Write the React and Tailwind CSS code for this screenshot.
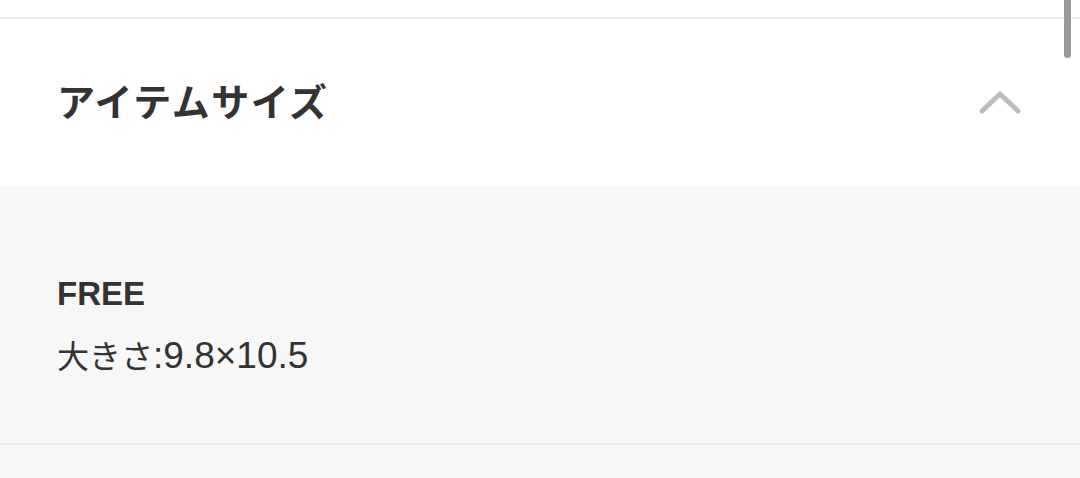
import React from "react";

export default function App() {
  return (
    <div
      className="relative w-[1080px] h-[478px] overflow-hidden bg-white text-[#333]"
      style={{ fontFamily: '"Liberation Sans", "Noto Sans CJK JP", sans-serif' }}
    >
      {/* previous section tail */}
      <div className="h-[19px] bg-white border-b-2 border-[#ededed]" />

      {/* accordion header */}
      <div className="h-[167px] flex items-center justify-between pl-[57px] pr-[58px]">
        <h2 className="text-[38px] font-bold leading-none tracking-[1.5px]">アイテムサイズ</h2>
        <svg width="44" height="24" viewBox="0 0 44 24" fill="none" className="mt-[1px]">
          <path
            d="M4 20 L22 3 L40 20"
            stroke="#bdbdbd"
            strokeWidth="5"
            strokeLinecap="round"
            strokeLinejoin="round"
          />
        </svg>
      </div>

      {/* accordion body */}
      <div className="bg-[#f7f7f7] pt-[88px] pb-[66px] pl-[57px] border-b-2 border-[#e8e8e8]">
        <p className="text-[33px] font-bold leading-[40px]">FREE</p>
        <p className="mt-[22px] text-[32px] leading-[40px]">
          大きさ<span className="text-[37px]">:9.8×10.5</span>
        </p>
      </div>
      <div className="h-[40px] bg-[#f7f7f7]" />

      {/* scrollbar */}
      <div className="absolute top-0 right-[9px] w-[7px] h-[58px] rounded-b-full bg-[#999]" />
    </div>
  );
}
